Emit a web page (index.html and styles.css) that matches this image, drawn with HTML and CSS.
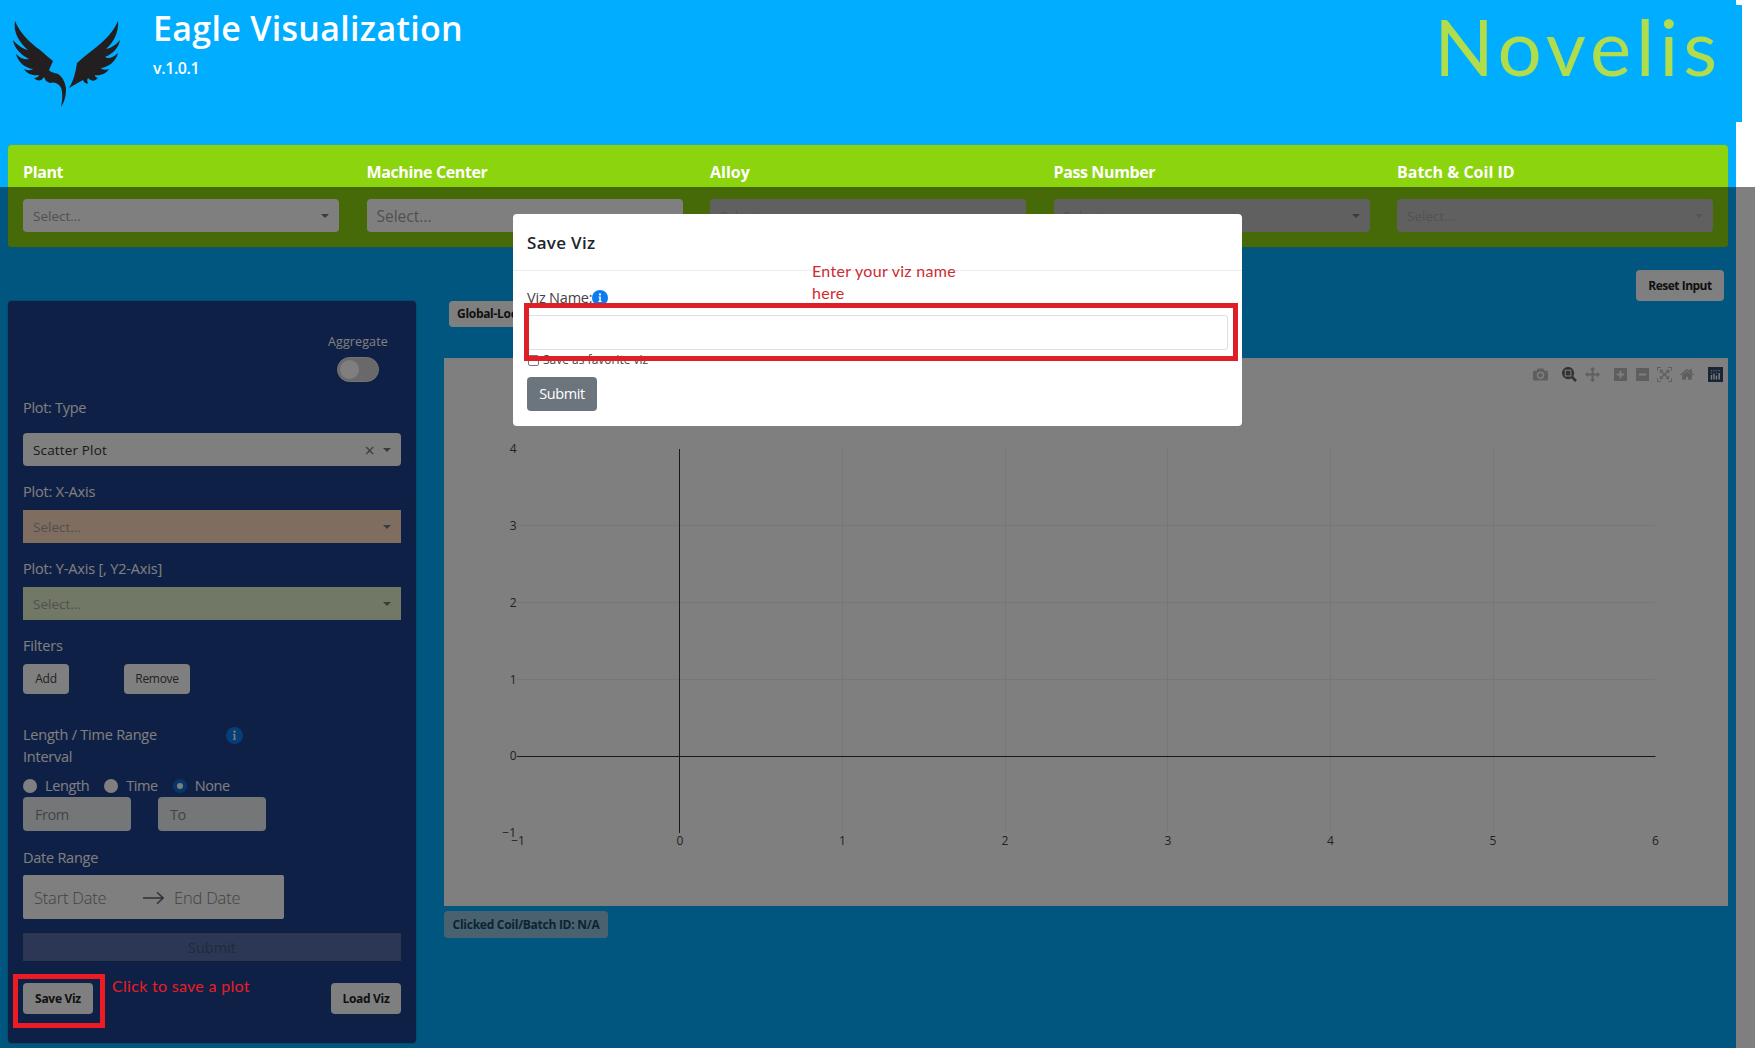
FILE: index.html
```html
<!DOCTYPE html>
<html lang="en">
<head>
<meta charset="utf-8">
<title>Eagle Visualization</title>
<link rel="stylesheet" href="styles.css">
</head>
<body>
<div class="app">
  <header class="header">
    <svg class="eagle" width="140" height="120" viewBox="0 0 140 120">
      <path d="M15 21C20 33 29 42 40 50C45 54 49 58 53 61L49 70C51 73 54 72 58 74C63 77 66 84 66 90C66 96 64 103 61 107C63 98 63 88 59 85C56 82 52 82 50 83L46 81L44 77C41 82 37 81 34 78C37 78 39 76 39 75C33 76 27 74 24 69C28 71 32 70 33 69C25 68 18 62 16 54C21 59 26 60 29 59C21 55 14 48 13 40C17 45 23 49 28 50C19 42 13 32 15 21Z"/>
      <path d="M118 21C113 33 104 41 94 49C88 54 82 58 77 63C76 70 74 80 69 88C74 85 79 82 83 80C85 84 87 84 88 83C87 81 87 80 88 78C92 82 95 81 98 78C95 77 95 76 95 75C100 76 106 74 109 69C105 70 102 70 101 68C109 67 116 61 118 53C113 58 108 59 105 57C113 54 119 47 120 40C116 45 111 48 106 49C114 42 119 32 118 21Z"/>
    </svg>
    <div class="titles">
      <h1 class="title">Eagle Visualization</h1>
      <div class="version">v.1.0.1</div>
    </div>
    <div class="brand">Novelis</div>
  </header>

  <section class="filters">
    <div class="field tight"><label>Plant</label><div class="select"><span>Select...</span><i class="caret"></i></div></div>
    <div class="field tight"><label>Machine Center</label><div class="select large"><span>Select...</span><i class="caret"></i></div></div>
    <div class="field"><label>Alloy</label><div class="select off"><span>Select...</span><i class="caret"></i></div></div>
    <div class="field tight"><label>Pass Number</label><div class="select off"><span>Select...</span><i class="caret dark"></i></div></div>
    <div class="field"><label>Batch &amp; Coil ID</label><div class="select off"><span>Select...</span><i class="caret"></i></div></div>
  </section>

  <main class="main">
    <aside class="sidebar">
      <div class="aggregate"><span>Aggregate</span><div class="toggle"></div></div>
      <div class="label type">Plot: Type</div>
      <div class="select value"><span>Scatter Plot</span><i class="clear">×</i><i class="caret"></i></div>
      <div class="label">Plot: X-Axis</div>
      <div class="select peach"><span>Select...</span><i class="caret"></i></div>
      <div class="label">Plot: Y-Axis [, Y2-Axis]</div>
      <div class="select sage"><span>Select...</span><i class="caret"></i></div>
      <div class="label">Filters</div>
      <div class="buttons"><button class="btn add">Add</button><button class="btn remove">Remove</button></div>
      <div class="range">
        <div class="range-text">Length / Time Range<br>Interval</div>
        <svg class="info" width="17" height="17" viewBox="0 0 16 16"><circle cx="8" cy="8" r="8"/><circle cx="8" cy="4.4" r="1.1" fill="#fff"/><path d="M6.6 6.6h2.2v4.5h.8v1H6.4v-1h.9V7.6h-.7z" fill="#fff"/></svg>
      </div>
      <div class="radios">
        <span class="radio"></span><span class="option">Length</span>
        <span class="radio"></span><span class="option">Time</span>
        <span class="radio on"></span><span>None</span>
      </div>
      <div class="inputs"><div class="input">From</div><div class="input">To</div></div>
      <div class="label date">Date Range</div>
      <div class="dates"><span class="start">Start Date</span>
        <svg width="22" height="14" viewBox="0 0 22 14"><path d="M0 7H20M14 1.2L20.2 7L14 12.8"/></svg>
        <span>End Date</span></div>
      <div class="submit-off">Submit</div>
      <div class="viz-row"><button class="btn bold">Save Viz</button><button class="btn bold">Load Viz</button></div>
    </aside>

    <section class="content">
      <div class="toolbar"><button class="btn bold global">Global-Local</button><button class="btn bold reset">Reset Input</button></div>
      <div class="graph">
        <div class="modebar">
          <svg class="m1" width="15" height="15" viewBox="0 0 1000 1000"><path transform="matrix(1 0 0 -1 0 850)" d="m500 450c-83 0-150-67-150-150 0-83 67-150 150-150 83 0 150 67 150 150 0 83-67 150-150 150z m400 150h-120c-16 0-34 13-39 29l-31 93c-6 15-23 28-40 28h-340c-16 0-34-13-39-28l-31-94c-6-15-23-28-40-28h-120c-55 0-100-45-100-100v-450c0-55 45-100 100-100h800c55 0 100 45 100 100v450c0 55-45 100-100 100z m-400-550c-138 0-250 112-250 250 0 138 112 250 250 250 138 0 250-112 250-250 0-138-112-250-250-250z m365 380c-19 0-35 16-35 35 0 19 16 35 35 35 19 0 35-16 35-35 0-19-16-35-35-35z"/></svg>
          <svg class="m2 active" width="15" height="15" viewBox="0 0 1000 1000"><path transform="matrix(1 0 0 -1 0 850)" d="m1000-25l-250 251c40 63 63 138 63 218 0 224-182 406-407 406-224 0-406-182-406-406s183-406 407-406c80 0 155 22 218 62l250-250 125 125z m-812 250l0 438 437 0 0-438-437 0z m62 375l313 0 0-312-313 0 0 312z"/></svg>
          <svg class="m3" width="15" height="15" viewBox="0 0 1000 1000"><path transform="matrix(1 0 0 -1 0 850)" d="m1000 350l-187 188 0-125-250 0 0 250 125 0-188 187-187-187 125 0 0-250-250 0 0 125-188-188 186-187 0 125 252 0 0-250-125 0 187-188 188 188-125 0 0 250 250 0 0-126 187 188z"/></svg>
          <svg class="m4" width="13" height="15" viewBox="0 0 875 1000"><path transform="matrix(1 0 0 -1 0 850)" d="m1 787l0-875 875 0 0 875-875 0z m687-500l-187 0 0-187-125 0 0 187-188 0 0 125 188 0 0 187 125 0 0-187 187 0 0-125z"/></svg>
          <svg class="m5" width="13" height="15" viewBox="0 0 875 1000"><path transform="matrix(1 0 0 -1 0 850)" d="m0 788l0-876 876 0 0 876-876 0z m688-500l-500 0 0 125 500 0 0-125z"/></svg>
          <svg class="m6" width="15" height="15" viewBox="0 0 1000 1000"><path transform="matrix(1 0 0 -1 0 850)" d="m250 850l-187 0-63 0 0-62 0-188 63 0 0 188 187 0 0 62z m688 0l-188 0 0-62 188 0 0-188 62 0 0 188 0 62-62 0z m-875-938l0 188-63 0 0-188 0-62 63 0 187 0 0 62-187 0z m875 188l0-188-188 0 0-62 188 0 62 0 0 62 0 188-62 0z m-125 188l-1 0-93-94-156 156 156 156 92-93 2 0 0 250-250 0 0-2 93-92-156-156-156 156 94 92 0 2-250 0 0-250 0 0 93 93 157-156-157-156-93 94 0 0 0-250 250 0 0 0-94 93 156 157 156-157-93-93 0 0 250 0 0 250z"/></svg>
          <svg class="m7" width="14" height="15" viewBox="0 0 928.6 1000"><path transform="matrix(1 0 0 -1 0 850)" d="m786 296v-267q0-15-11-26t-25-10h-214v214h-143v-214h-214q-15 0-25 10t-11 26v267q0 1 0 2t0 2l321 264 321-264q1-1 1-4z m124 39l-34-41q-5-5-12-6h-2q-7 0-12 3l-386 322-386-322q-7-4-13-4-7 2-12 7l-35 41q-4 5-3 13t6 12l401 334q18 15 42 15t43-15l136-114v109q0 8 5 13t13 5h107q8 0 13-5t5-13v-227l122-102q5-5 6-12t-4-13z"/></svg>
          <svg class="m8" width="15" height="15" viewBox="0 0 15 15"><rect width="15" height="15" fill="#33496f"/><path d="M3.5 8v4.5M6 6.5v6M8.5 8.5v4M11.2 6v6.5" stroke="#fff" stroke-width="1.4"/><path d="M2.8 3.7h1.4M5.3 3.7h1.4M7.8 3.7h1.4M10.5 3.7h1.4M2.8 6h1.4M7.8 6h1.4" stroke="#b5c3dc" stroke-width="1.2"/></svg>
        </div>
        <svg class="plot" width="1284" height="548" viewBox="444 358 1284 548">
          <path class="grid" d="M842.5 448V832M1005.5 448V832M1167.5 448V832M1330.5 448V832M1493.5 448V832M517 525.5H1655M517 602.5H1655M517 679.5H1655"/>
          <path class="zero" d="M679.5 449V833M517 756.5H1655.5"/>
          <g text-anchor="end"><text x="516.5" y="453">4</text><text x="516.5" y="530">3</text><text x="516.5" y="606.5">2</text><text x="516.5" y="683.5">1</text><text x="516.5" y="760">0</text><text x="516" y="836.5">−1</text></g>
          <g text-anchor="middle"><text x="518" y="845">−1</text><text x="680" y="845">0</text><text x="842.5" y="845">1</text><text x="1005" y="845">2</text><text x="1168" y="845">3</text><text x="1330.5" y="845">4</text><text x="1493" y="845">5</text><text x="1655.5" y="845">6</text></g>
        </svg>
      </div>
      <div class="clicked">Clicked Coil/Batch ID: N/A</div>
    </section>
  </main>
</div>

<div class="backdrop"></div>

<div class="modal">
  <div class="modal-head">Save Viz</div>
  <div class="modal-body">
    <div class="name"><span>Viz Name:</span><svg class="info" width="16" height="16" viewBox="0 0 16 16"><circle cx="8" cy="8" r="8"/><circle cx="8" cy="4.4" r="1.1" fill="#fff"/><path d="M6.6 6.6h2.2v4.5h.8v1H6.4v-1h.9V7.6h-.7z" fill="#fff"/></svg></div>
    <div class="name-input"></div>
    <div class="fav"><span class="check"></span><span>Save as favorite viz</span></div>
    <button class="submit">Submit</button>
  </div>
</div>

<div class="mark mark-input"></div>
<div class="mark mark-save"></div>
<div class="note note-input">Enter your viz name<br>here</div>
<div class="note note-save">Click to save a plot</div>
</body>
</html>
```
FILE: styles.css
```css
* { box-sizing: border-box; }
body {
  margin: 0;
  width: 1755px;
  height: 1048px;
  overflow: hidden;
  position: relative;
  background: #fff;
  color: #fff;
  font: 14.5px/22px "Open Sans", "Noto Sans", sans-serif;
}
button { font: inherit; border: 0; padding: 0; }
i { font-style: normal; }
.app { width: 1736px; height: 1048px; background: #00adff; }

/* header */
.header { height: 145px; display: flex; position: relative; }
.header::after {
  content: "";
  position: absolute;
  left: 1736px;
  top: 5px;
  width: 6px;
  height: 117px;
  background: #00adff;
}
.eagle { fill: #231f20; }
.titles { padding: 5px 0 0 13px; flex: 1; }
.title { margin: 0; font-size: 34px; line-height: 46px; font-weight: 600; letter-spacing: .3px; }
.version { font-size: 16px; line-height: 22px; font-weight: 600; margin-top: 6px; letter-spacing: -.4px; }
.brand { font: 400 78px/93px Lato, sans-serif; color: #b1dc4c; padding-right: 14px; letter-spacing: 5px; }

/* filter bar */
.filters {
  margin: 0 8px;
  height: 102px;
  padding: 16px 15px 0;
  display: grid;
  grid-template-columns: repeat(5, 316px);
  justify-content: space-between;
  background: #8cd40e;
  border-radius: 4px;
  box-shadow: 0 0 2px #5fae4e;
}
.field label { display: block; font-size: 16px; font-weight: 700; height: 22px; margin-bottom: 16px; }
.tight label { letter-spacing: -.38px; }
.select {
  height: 33px;
  padding: 0 10px;
  display: flex;
  align-items: center;
  background: #fff;
  border-radius: 4px;
  color: #a2a2a2;
  font-size: 13.5px;
}
.select span { flex: 1; }
.large { font-size: 15.5px; }
.off { background: #c0c0c0; color: #a4a4a4; }
.caret { border: 4.5px solid transparent; border-top-color: #777; border-bottom: 0; margin-top: 1px; }
.off .caret { border-top-color: #aaa; }
.off .caret.dark { border-top-color: #777; }
.clear { color: #777; font-size: 18px; margin-right: 8px; }

/* main area */
.main { display: flex; padding: 54px 8px 0; gap: 28px; }
.sidebar {
  width: 408px;
  height: 742px;
  padding: 30px 15px 0 15px;
  background: #1e408c;
  border-radius: 4px;
  box-shadow: 0 0 2px #1a6a6a;
}
.aggregate { width: 60px; margin-left: 305px; font-size: 12.5px; line-height: 22px; white-space: nowrap; letter-spacing: .12px; }
.toggle { width: 42px; height: 25px; margin: 4px 0 0 9px; border-radius: 13px; background: #d2d2d2; border: 1px solid #e8e8ee; padding: 2px; }
.toggle::before { content: ""; display: block; width: 19px; height: 19px; border-radius: 50%; background: #fff; }
.label { height: 22px; margin: 15px 0 7px; white-space: nowrap; letter-spacing: -.17px; }
.label.type { margin-bottom: 14px; letter-spacing: -.3px; }
.value { color: #333; letter-spacing: .15px; }
.peach { background: #ffdac0; border-radius: 0; }
.sage { background: #e4f0cc; border-radius: 0; }
.buttons { display: flex; gap: 55px; }
.btn { height: 30px; background: #fff; border-radius: 4px; color: #444; font-size: 12px; letter-spacing: -.3px; }
.add { width: 46px; }
.remove { width: 66px; }
.range { display: flex; margin-top: 30px; }
.range-text { width: 203px; letter-spacing: -.23px; }
.info { fill: #0c7cf0; margin-top: 3px; }
.radios { display: flex; align-items: center; height: 22px; margin-top: 7px; letter-spacing: -.4px; }
.radio { width: 14px; height: 14px; border-radius: 50%; background: #fff; margin-right: 8px; }
.radio.on { background: #fff; border: 4.5px solid #0c6fd0; }
.option { margin-right: 15px; }
.inputs { display: flex; gap: 27px; }
.input { width: 108px; height: 34px; padding: 7px 12px; border-radius: 4px; background: #e9ecef; color: #858b92; letter-spacing: -.5px; }
.label.date { margin: 16px 0 6px; letter-spacing: -.25px; }
.dates { width: 261px; height: 44px; padding: 1px 11px 0; display: flex; align-items: center; background: #fff; border-radius: 2px; color: #858585; font-size: 16.5px; font-weight: 300; letter-spacing: -.2px; }
.start { width: 109px; }
.dates svg { fill: none; stroke: #606060; stroke-width: 1.5; margin-right: 9px; }
.submit-off { margin-top: 14px; height: 28px; line-height: 28px; text-align: center; background: #566fa8; border: 1px solid #5c6d90; color: #40547f; }
.viz-row { display: flex; justify-content: space-between; margin-top: 22px; }
.bold { height: 31px; width: 70px; font-weight: 700; color: #222; }

.content { width: 1284px; }
.toolbar { height: 57px; display: flex; justify-content: space-between; padding: 0 4px 0 5px; }
.global { width: 90px; height: 26px; text-align: left; padding-left: 8px; letter-spacing: -.3px; }
.reset { width: 88px; margin-top: -31px; letter-spacing: -.5px; }
.graph { height: 548px; background: #fff; display: grid; }
.graph > * { grid-area: 1 / 1; }
.modebar { display: flex; margin: 9px 5px 0 0; height: 15px; justify-content: flex-end; fill: #bcbcbc; }
.active { fill: #666; }
.m1 { margin-right: 14px; }
.m2 { margin-right: 8px; }
.m3 { margin-right: 14px; }
.m4 { margin-right: 9px; }
.m5 { margin-right: 8px; }
.m6 { margin-right: 8px; }
.m7 { margin-right: 14px; }
.plot text { fill: #444; font-size: 12px; }
.grid { stroke: #eee; }
.zero { stroke: #333; }
.clicked { width: 164px; height: 27px; margin-top: 5px; line-height: 27px; text-align: center; border-radius: 4px; background: #94c4de; color: #124a68; font-size: 12px; font-weight: 700; white-space: nowrap; letter-spacing: -.27px; }

/* dialog */
.backdrop { position: absolute; inset: 187px 0 0 0; background: rgba(0, 0, 0, .5); }
.modal { position: absolute; left: 513px; top: 214px; width: 729px; height: 212px; background: #fff; border-radius: 4px; color: #212529; }
.modal-head { height: 57px; padding: 18px 14px; font-size: 17px; font-weight: 600; letter-spacing: .3px; border-bottom: 1px solid #e9ecef; }
.modal-body { padding: 16px 14px 0; }
.name { display: flex; color: #444; height: 28px; letter-spacing: -.2px; }
.name .info { margin: 3px 0 0 0; }
.name-input { height: 35px; border: 1px solid #dcdfe3; border-radius: 3px; }
.fav { display: flex; align-items: center; height: 20px; padding-left: 1px; font-size: 12px; color: #444; }
.check { width: 11px; height: 11px; border: 1px solid #777; border-radius: 2px; margin-right: 4px; }
.submit { display: block; margin-top: 7px; width: 70px; height: 34px; border-radius: 4px; background: #6c757d; color: #fff; letter-spacing: -.4px; }

/* annotations */
.mark { position: absolute; border: 5px solid #dd2027; }
.mark-input { left: 524px; top: 303px; width: 714px; height: 58px; }
.mark-save { left: 13px; top: 974px; width: 92px; height: 54px; border-color: #ed1c24; }
.note { position: absolute; font: 16px/22px Lato, sans-serif; letter-spacing: .3px; color: #cf2a30; white-space: nowrap; }
.note-input { left: 812px; top: 260px; }
.note-save { left: 112px; top: 975px; color: #ed1c24; }
```
